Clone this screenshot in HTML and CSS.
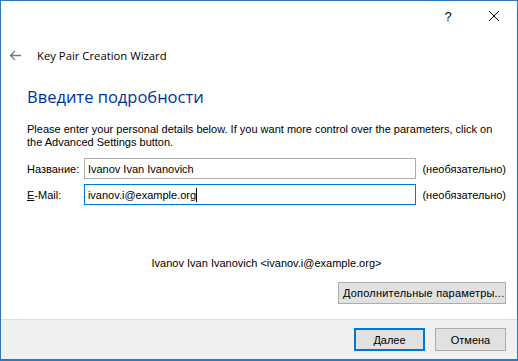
FILE: index.html
```html
<!DOCTYPE html>
<html lang="ru">
    <head>
        <meta charset="UTF-8" />
        <title>Key Pair Creation Wizard</title>
        <link rel="stylesheet" href="styles.css">
    </head>
    <body>
        <div class="ventana">
            <!-- BARRA DE TITULO -->
            <div class="barra-titulo">
                <span class="boton-barra">?</span>
                <span class="boton-barra">
                    <svg width="12" height="12" viewBox="0 0 12 12">
                        <path d="M1 1 L11 11 M11 1 L1 11" stroke="#000" stroke-width="1" fill="none" />
                    </svg>
                </span>
            </div>

            <div class="navegacion">
                <svg class="flecha" width="13" height="11" viewBox="0 0 13 11">
                    <path d="M12 5.5 H1.5 M6 1 L1.5 5.5 L6 10" stroke="#777" stroke-width="1.3" fill="none" />
                </svg>
                <span class="titulo">Key Pair Creation Wizard</span>
            </div>

            <div class="contenido">
                <h1>Введите подробности</h1>

                <p class="explicacion">Please enter your personal details below. If you want more control over the parameters, click on the Advanced Settings button.</p>

                <div class="fila">
                    <label>Название:</label>
                    <div class="campo">Ivanov Ivan Ivanovich</div>
                    <span class="opcional">(необязательно)</span>
                </div>
                <div class="fila">
                    <label><u>E</u>-Mail:</label>
                    <div class="campo activo">ivanov.i@example.org<span class="cursor"></span></div>
                    <span class="opcional">(необязательно)</span>
                </div>

                <p class="resumen">Ivanov Ivan Ivanovich &lt;ivanov.i@example.org&gt;</p>

                <div class="derecha">
                    <button class="boton boton-avanzado">Дополнительные параметры...</button>
                </div>
            </div>

            <div class="pie">
                <button class="boton boton-siguiente"><u>Д</u>алее</button>
                <button class="boton">Отмена</button>
            </div>
        </div>
    </body>
</html>
```

FILE: styles.css
```css
/* ESTILOS "KEY PAIR CREATION WIZARD" */
* {
    box-sizing: border-box;
    margin: 0;
    padding: 0;
}

html {
    background: white;
}

body {
    width: 518px;
    height: 361px;
    overflow: hidden;
    font-family: "Liberation Sans", sans-serif;
    font-size: 11px;
    color: black;
}

.ventana {
    display: flex;
    flex-direction: column;
    width: 518px;
    height: 361px;
    background: white;
    border: 1px solid rgb(43, 121, 194);
    border-bottom-width: 2px;
}

.barra-titulo {
    display: flex;
    justify-content: flex-end;
    height: 30px;
}

.boton-barra {
    display: flex;
    align-items: center;
    justify-content: center;
    width: 46px;
    height: 30px;
    font-size: 13px;
}

.navegacion {
    display: flex;
    align-items: center;
    height: 48px;
    padding-left: 8px;
}

.flecha {
    margin-right: 15px;
}

.titulo {
    font-family: "Open Sans", "Liberation Sans", sans-serif;
    font-size: 11.3px;
}

.contenido {
    flex: 1;
    padding: 7px 11px 0 26px;
}

h1 {
    font-family: "Open Sans", "Liberation Sans", sans-serif;
    font-size: 16.5px;
    font-weight: normal;
    color: rgb(0, 51, 153);
    line-height: 22px;
}

.explicacion {
    margin-top: 15px;
    line-height: 13px;
}

.fila {
    display: flex;
    align-items: center;
    margin-top: 5px;
}

.explicacion + .fila {
    margin-top: 9px;
}

.fila label {
    width: 57px;
}

.campo {
    display: flex;
    align-items: center;
    width: 333px;
    height: 21px;
    padding-left: 3px;
    border: 1px solid rgb(173, 173, 173);
}

.campo.activo {
    border-color: rgb(0, 120, 215);
}

.cursor {
    display: inline-block;
    width: 1px;
    height: 14px;
    background: black;
}

.opcional {
    margin-left: 6px;
}

.resumen {
    margin-top: 52px;
    text-align: center;
}

.derecha {
    display: flex;
    justify-content: flex-end;
    margin-top: 13px;
}

.boton {
    height: 22px;
    padding: 0 4px;
    font-family: "Liberation Sans", sans-serif;
    font-size: 11px;
    color: black;
    white-space: nowrap;
    background: rgb(225, 225, 225);
    border: 1px solid rgb(173, 173, 173);
}

.boton-avanzado {
    width: 168px;
    letter-spacing: 0.2px;
}

.pie {
    display: flex;
    justify-content: flex-end;
    align-items: center;
    gap: 10px;
    height: 40px;
    padding-right: 11px;
    background: rgb(240, 240, 240);
    border-top: 1px solid rgb(223, 223, 223);
}

.pie .boton {
    width: 71px;
    height: 23px;
}

.boton-siguiente {
    border: 2px solid rgb(0, 120, 215);
}
```
